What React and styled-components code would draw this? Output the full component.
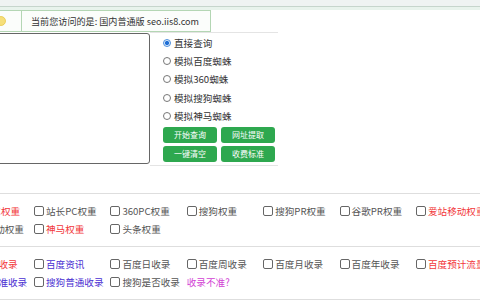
import React from 'react'
import styled, { createGlobalStyle } from 'styled-components'

const GlobalStyle = createGlobalStyle`
  html, body {
    margin: 0;
    padding: 0;
    background: #fff;
    overflow: hidden;
  }
  body {
    font-family: "Noto Sans CJK SC", "Microsoft YaHei", "Noto Sans", sans-serif;
    color: #555;
  }
`

const Page = styled.div`
  width: 480px;
  height: 300px;
  overflow: hidden;
  font-size: 9.6px;
`

const TopStrip = styled.div`
  height: 6px;
  background: #eff3f2;
  border-bottom: 1px solid #c6d5cc;
`

const Band = styled.div`
  height: 3px;
  background: #e8f3ec;
`

const Notice = styled.div`
  display: flex;
  align-items: stretch;
  width: 229px;
  height: 20px;
  margin-left: -20px;
  border: 1px solid #b4d6b4;
  background: #fbfdfb;
`

const IconCell = styled.div`
  width: 40px;
  display: flex;
  align-items: center;
  justify-content: center;
  border-right: 1px solid #b4d6b4;
`

const NoticeText = styled.div`
  display: flex;
  align-items: center;
  padding-left: 9px;
  color: #333;
  font-size: 9.1px;
  white-space: nowrap;
`

const Main = styled.div`
  display: flex;
  height: 134px;
`

const Editor = styled.div`
  width: 210px;
  margin-left: -60px;
  padding: 1px 0 2px;
`

const Area = styled.textarea`
  box-sizing: border-box;
  display: block;
  width: 100%;
  height: 100%;
  border: 1px solid #666;
  border-radius: 3px;
  resize: none;
  outline: none;
`

const Panel = styled.div`
  box-sizing: border-box;
  width: 128px;
  padding: 1px 0 4px 13px;
  border-top: 1px solid #e4e4e4;
  border-bottom: 1px solid #e4e4e4;
`

const RadioRow = styled.label`
  display: flex;
  align-items: center;
  height: 18.2px;
  color: #333;
  white-space: nowrap;
`

const Radio = styled.input.attrs({ type: 'radio' })`
  appearance: none;
  box-sizing: border-box;
  width: 8px;
  height: 8px;
  margin: 0 3px 0 0;
  border-radius: 50%;
  border: 1px solid #777;
  background: #fff;

  &:checked {
    border-color: #4d8fdc;
    background: radial-gradient(circle, #1f6fd6 0 2px, #dbe9fa 2.2px);
  }
`

const Buttons = styled.div`
  display: grid;
  grid-template-columns: 54px 54px;
  grid-auto-rows: 16px;
  column-gap: 4px;
  row-gap: 3px;
  margin-top: 2px;
`

const GreenBtn = styled.button`
  border: none;
  border-radius: 3px;
  background: #2ea84f;
  color: #fff;
  font-family: inherit;
  font-size: 8px;
  padding: 0;
`

const Section = styled.div`
  display: grid;
  grid-template-columns: repeat(7, 76.4px);
  grid-auto-rows: 17.5px;
  margin-left: -42.4px;
  padding: 8.5px 0;
  border-top: 1px solid #dedede;
  margin-top: ${p => p.$gap || 0}px;
`

const Item = styled.label`
  display: flex;
  align-items: center;
  white-space: nowrap;
  color: ${p => p.$color || '#555'};
`

const Box = styled.input.attrs({ type: 'checkbox' })`
  appearance: none;
  box-sizing: border-box;
  width: 10px;
  height: 10px;
  margin: 0 2px 0 0;
  border: 1px solid #666;
  border-radius: 2px;
  background: #fff;
`

const Link = styled.span`
  display: flex;
  align-items: center;
  color: #d23fd4;
  white-space: nowrap;
`

const Rule = styled.div`
  border-top: 1px solid #dedede;
  margin-left: -42.4px;
`

const RED = '#f2373a'
const PURPLE = '#4a2fd2'

const weightRows = [
  [
    ['百度PC权重', RED], ['站长PC权重'], ['360PC权重'], ['搜狗权重'],
    ['搜狗PR权重'], ['谷歌PR权重'], ['爱站移动权重', RED],
  ],
  [['360移动权重'], ['神马权重', RED], ['头条权重']],
]

const indexRows = [
  [
    ['百度总收录', RED], ['百度资讯', PURPLE], ['百度日收录'], ['百度周收录'],
    ['百度月收录'], ['百度年收录'], ['百度预计流量', RED],
  ],
  [['搜狗精准收录', PURPLE], ['搜狗普通收录', PURPLE], ['搜狗是否收录']],
]

const spiders = ['直接查询', '模拟百度蜘蛛', '模拟360蜘蛛', '模拟搜狗蜘蛛', '模拟神马蜘蛛']

function Row({ items }) {
  return (
    <>
      {items.map(([label, color]) => (
        <Item key={label} $color={color}>
          <Box />
          {label}
        </Item>
      ))}
      {Array.from({ length: 7 - items.length }).map((_, i) => <span key={i} />)}
    </>
  )
}

export default function App() {
  return (
    <Page>
      <GlobalStyle />
      <TopStrip />
      <Band />
      <Notice>
        <IconCell>
          <svg width="10" height="10" viewBox="0 0 10 10">
            <circle cx="5" cy="5" r="4.5" fill="#f6df7a" stroke="#e9c84a" strokeWidth="0.8" />
          </svg>
        </IconCell>
        <NoticeText>当前您访问的是: 国内普通版 seo.iis8.com</NoticeText>
      </Notice>

      <Main>
        <Editor>
          <Area />
        </Editor>
        <Panel>
          {spiders.map((s, i) => (
            <RadioRow key={s}>
              <Radio name="spider" defaultChecked={i === 0} />
              {s}
            </RadioRow>
          ))}
          <Buttons>
            <GreenBtn>开始查询</GreenBtn>
            <GreenBtn>网址提取</GreenBtn>
            <GreenBtn>一键清空</GreenBtn>
            <GreenBtn>收费标准</GreenBtn>
          </Buttons>
        </Panel>
      </Main>

      <Section $gap={27}>
        <Row items={weightRows[0]} />
        <Row items={weightRows[1]} />
      </Section>
      <Section>
        <Row items={indexRows[0]} />
        {indexRows[1].map(([label, color]) => (
          <Item key={label} $color={color}>
            <Box />
            {label}
          </Item>
        ))}
        <Link>收录不准?</Link>
      </Section>
      <Rule />
    </Page>
  )
}
